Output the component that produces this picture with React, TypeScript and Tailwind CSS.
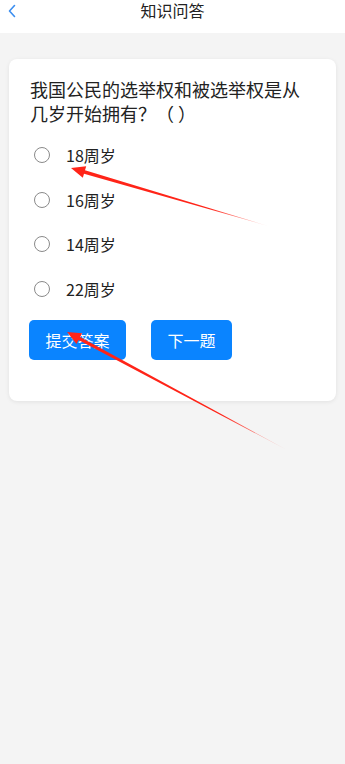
import React from 'react';

const options = ['18周岁', '16周岁', '14周岁', '22周岁'];

export default function App() {
  const [picked, setPicked] = React.useState<number | null>(null);

  return (
    <div
      className="relative min-h-[764px] w-full bg-[#f4f4f4]"
      style={{ fontFamily: '"Noto Sans CJK SC", "Noto Sans", sans-serif' }}
    >
      {/* header */}
      <div className="relative flex h-[33px] justify-center bg-white pt-[1px]">
        <svg className="absolute left-[7px] top-[4px]" width="10" height="14" viewBox="0 0 10 14" fill="none">
          <path d="M7.5 1.5 L2.5 7 L7.5 12.5" stroke="#3b8ef0" strokeWidth="1.6" strokeLinecap="round" strokeLinejoin="round" />
        </svg>
        <div className="text-[16px] leading-[18px] text-[#222]">知识问答</div>
      </div>

      {/* card */}
      <div className="mx-[9px] mt-[26px] rounded-lg bg-white px-[21px] pb-[41px] pt-[18px] shadow-[0_1px_4px_rgba(0,0,0,0.08)]">
        <div className="text-[18px] leading-[24px] text-[#222]">
          我国公民的选举权和被选举权是从几岁开始拥有？（ ）
        </div>

        <div className="mt-[8px] flex flex-col">
          {options.map((o, i) => (
            <label key={o} className="flex h-[44.5px] cursor-pointer items-center" onClick={() => setPicked(i)}>
              <span className="ml-[4px] flex h-[16px] w-[16px] items-center justify-center rounded-full border border-[#8a8a8a]">
                {picked === i && <span className="h-[8px] w-[8px] rounded-full bg-[#0a84ff]" />}
              </span>
              <span className="ml-[16px] text-[16px] leading-[20px] text-[#222]">{o}</span>
            </label>
          ))}
        </div>

        <div className="-ml-[1px] mt-[9px] flex gap-[25px]">
          <button className="h-[40px] w-[97px] rounded-[5px] bg-[#0a84ff] text-[16px] text-white">提交答案</button>
          <button className="h-[40px] w-[81px] rounded-[5px] bg-[#0a84ff] text-[16px] text-white">下一题</button>
        </div>
      </div>

      {/* annotation arrows */}
      <svg className="pointer-events-none absolute left-0 top-0" width="345" height="764" viewBox="0 0 345 764">
        <defs>
          <linearGradient id="fade1" x1="71" y1="168" x2="268" y2="226" gradientUnits="userSpaceOnUse">
            <stop offset="0.7" stopColor="#ff2418" />
            <stop offset="1" stopColor="#ff2418" stopOpacity="0.2" />
          </linearGradient>
          <linearGradient id="fade2" x1="67" y1="332" x2="287" y2="450" gradientUnits="userSpaceOnUse">
            <stop offset="0.7" stopColor="#ff2418" />
            <stop offset="1" stopColor="#ff2418" stopOpacity="0.2" />
          </linearGradient>
        </defs>
        <polygon fill="url(#fade1)" points="71,168 86.2,166.2 85,170.3 268,226 84,173.7 82.8,177.8" />
        <polygon fill="url(#fade2)" points="67,332 82.1,333.3 80.1,337.1 287,450 78.5,340.1 76.5,343.9" />
      </svg>
    </div>
  );
}
